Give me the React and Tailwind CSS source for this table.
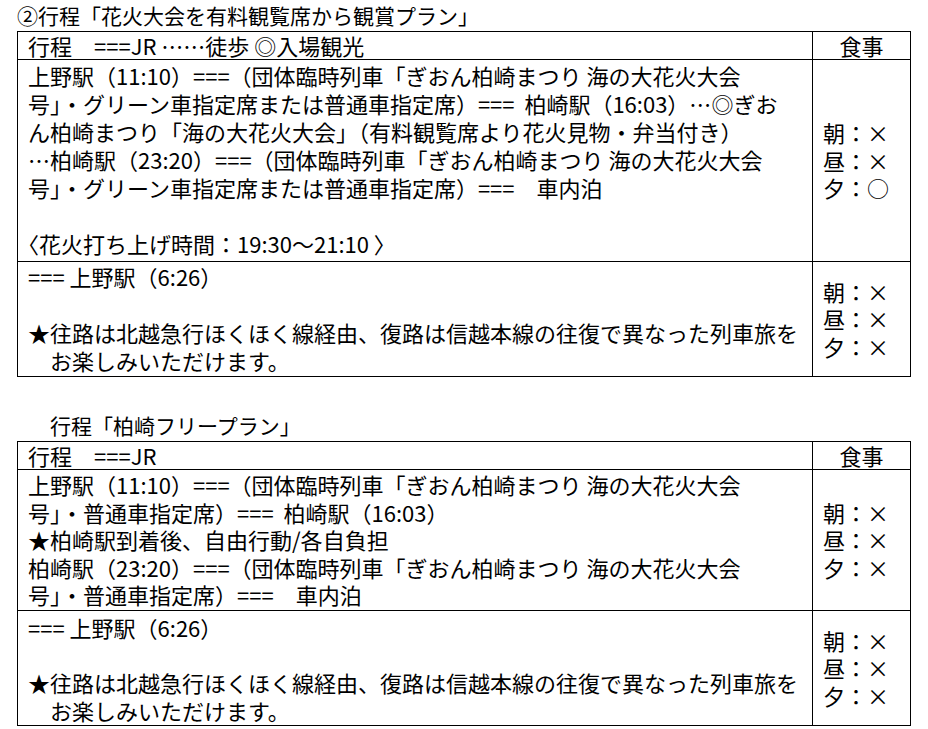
const font = { fontFamily: '"Noto Sans CJK JP", "Noto Sans", sans-serif' };

// full-width forms for the ellipsis and the cross
const F = ({ children }) => <span className="[font-feature-settings:'fwid']">{children}</span>;

function Meals({ dinner }) {
  return (
    <div className="w-[98px] shrink-0 border-l border-black pl-[10px] flex flex-col justify-center leading-[27.5px]">
      <div>朝：<F>×</F></div>
      <div>昼：<F>×</F></div>
      <div>夕：{dinner || <F>×</F>}</div>
    </div>
  );
}

function Lines({ lines, className = '' }) {
  return (
    <div className={`flex-1 pl-[10px] whitespace-pre ${className}`}>
      {lines.map((l, i) => (
        <div key={i}>{l === '' ? '\u00a0' : l}</div>
      ))}
    </div>
  );
}

function Table({ header, rows }) {
  return (
    <div className="ml-[17px] w-[894px] border border-black">
      <div className="flex h-[27px] leading-[27px]">
        <div className="flex-1 pl-[10px] whitespace-pre">{header}</div>
        <div className="w-[98px] shrink-0 border-l border-black text-center">食事</div>
      </div>
      {rows.map((r, i) => (
        <div key={i} className="flex border-t border-black">
          <Lines lines={r.lines} className={r.cls} />
          <Meals dinner={r.dinner} />
        </div>
      ))}
    </div>
  );
}

const back = [
  '=== 上野駅（6:26）',
  '',
  '★往路は北越急行ほくほく線経由、復路は信越本線の往復で異なった列車旅を',
  '　お楽しみいただけます。',
];

export default function App() {
  return (
    <div lang="ja" className="bg-white text-black text-[22px] w-[928px] min-h-[729px]" style={font}>
      <div className="h-[31px] leading-[30px] pl-[17px] text-[21px]">②行程「花火大会を有料観覧席から観賞プラン」</div>
      <Table
        header={<>行程　===JR <F>……</F>徒歩 ◎入場観光</>}
        rows={[
          {
            cls: 'pt-[1px] pb-[4px] leading-[28px]',
            dinner: '○',
            lines: [
              '上野駅（11:10）===（団体臨時列車「ぎおん柏崎まつり 海の大花火大会',
              <>号」・グリーン車指定席または普通車指定席）===  柏崎駅（16:03）<F>…</F>◎ぎお</>,
              'ん柏崎まつり「海の大花火大会」（有料観覧席より花火見物・弁当付き）',
              <><F>…</F>柏崎駅（23:20）===（団体臨時列車「ぎおん柏崎まつり 海の大花火大会</>,
              '号」・グリーン車指定席または普通車指定席）===　車内泊',
              '',
              <>
                <span className="[font-feature-settings:'halt']">〈</span>花火打ち上げ時間：19:30～21:10 〉
              </>,
            ],
          },
          { cls: 'pb-[2px] leading-[28px]', lines: back },
        ]}
      />
      <div className="h-[33px]" />
      <div className="h-[31px] leading-[30px] pl-[50px] text-[21px]">行程「柏崎フリープラン」</div>
      <Table
        header="行程　===JR"
        rows={[
          {
            cls: 'pt-[1px] pb-[1.5px] leading-[27.5px]',
            lines: [
              '上野駅（11:10）===（団体臨時列車「ぎおん柏崎まつり 海の大花火大会',
              '号」・普通車指定席）===  柏崎駅（16:03）',
              '★柏崎駅到着後、自由行動/各自負担',
              '柏崎駅（23:20）===（団体臨時列車「ぎおん柏崎まつり 海の大花火大会',
              '号」・普通車指定席）===　車内泊',
            ],
          },
          { cls: 'pt-[3px] pb-[1px] leading-[27.5px]', lines: back },
        ]}
      />
    </div>
  );
}
